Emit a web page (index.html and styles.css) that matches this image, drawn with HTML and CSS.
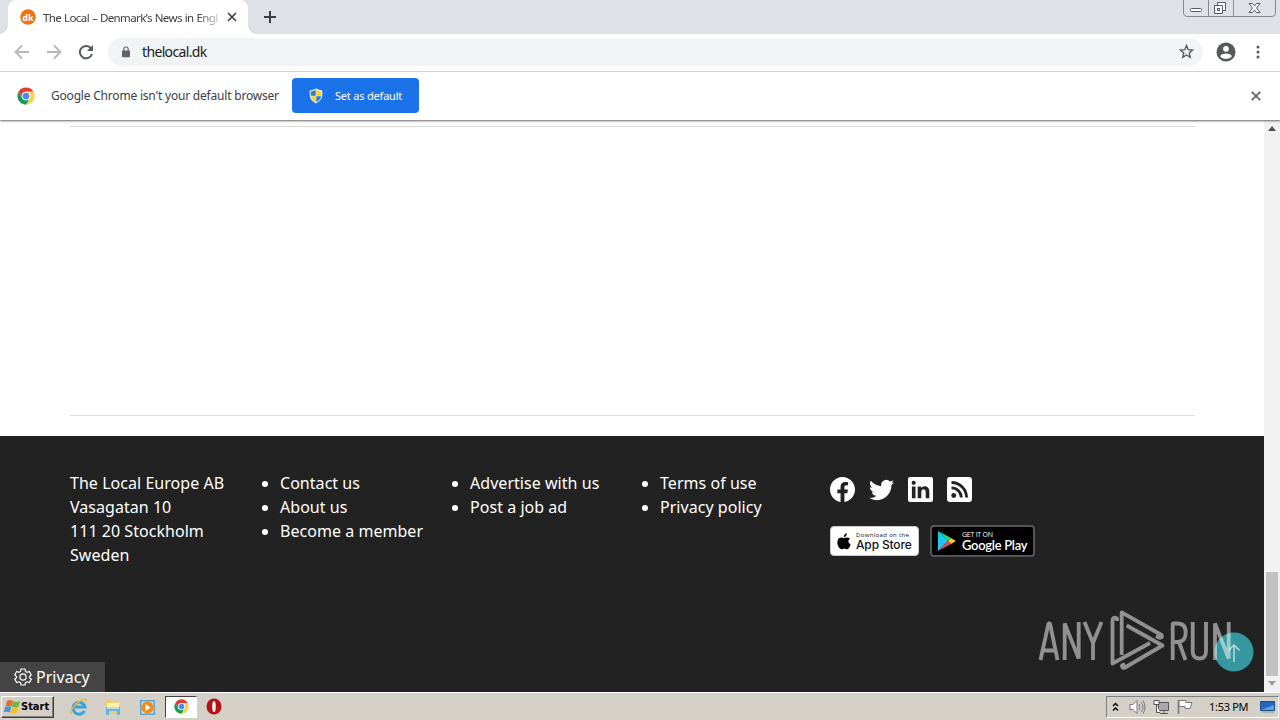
FILE: index.html
```html
<!DOCTYPE html>
<html lang="en">
<head>
<meta charset="utf-8">
<title>The Local – Denmark’s News in English</title>
<link rel="stylesheet" href="styles.css">
</head>
<body>
<svg class="defs" width="0" height="0">
  <symbol id="chrome" viewBox="0 0 48 48">
    <circle cx="24" cy="24" r="23" fill="#fff"/>
    <path fill="#e33b2e" d="M4.1 12.5A23 23 0 0 1 43.9 12.5H24A11.5 11.5 0 0 0 14 18.3L13.9 29.5Z"/>
    <path fill="#fcd04b" d="M43.9 12.5A23 23 0 0 1 24 47L34 29.7A11.5 11.5 0 0 0 24 12.5Z"/>
    <path fill="#169b55" d="M24 47A23 23 0 0 1 4.1 12.5L14 29.7A11.5 11.5 0 0 0 34 29.7Z"/>
    <circle cx="24" cy="24" r="11.5" fill="#fff"/><circle cx="24" cy="24" r="9" fill="#4a8af4"/>
  </symbol>
</svg>
<div class="screen">
  <header class="tabstrip">
    <div class="tab">
      <svg class="favicon" width="16" height="16" viewBox="0 0 16 16"><circle cx="8" cy="8" r="7.8" fill="#ee7410"/><text class="dk" x="8" y="11.5" text-anchor="middle">dk</text></svg>
      <span class="tab-title">The Local – Denmark’s News in English</span>
      <svg class="tab-close" width="10" height="10" viewBox="0 0 10 10"><path d="M1 1l8 8M9 1l-8 8" stroke="#3c4043" stroke-width="1.7"/></svg>
    </div>
    <svg class="new-tab" width="14" height="14" viewBox="0 0 14 14"><path d="M7 1v12M1 7h12" stroke="#3c4043" stroke-width="2"/></svg>
    <svg class="window-controls" width="94" height="18" viewBox="0 0 94 18" fill="none">
      <path d="M.5 0V13q0 3.500 3.500 3.500H89q3.500 0 3.500-3.500V0M25.500 0v16M50.500 0v16" stroke="#858b94"/>
      <rect x="7.500" y="8.500" width="11" height="3" rx="1" fill="#fff" stroke="#555b64"/>
      <path d="M34.500 2.500h8v8h-3v3h-8v-8h3zM34.500 5.500h5v5" fill="#fff" stroke="#555b64"/><rect x="34.500" y="8.500" width="2" height="2" stroke="#555b64"/>
      <path d="M66 3.500h3.500l2 2.500 2-2.500H77l-3.500 4.500 3.500 4.500h-3.500l-2-2.500-2 2.500H66l3.500-4.500z" fill="#fff" stroke="#555b64"/>
    </svg>
  </header>
  <nav class="toolbar">
    <svg class="nav-icon" width="16" height="16" viewBox="0 0 16 16" fill="none" stroke="#b5b7ba" stroke-width="1.800"><path d="M15 8H2M8 1.500L1.500 8 8 14.500"/></svg>
    <svg class="nav-icon" width="16" height="16" viewBox="0 0 16 16" fill="none" stroke="#b5b7ba" stroke-width="1.800"><path d="M1 8h13M8 1.500L14.500 8 8 14.500"/></svg>
    <svg class="nav-icon" width="16" height="16" viewBox="0 0 16 16"><path d="M13 4.300A6.200 6.200 0 1 0 14 10" fill="none" stroke="#55595e" stroke-width="2"/><path d="M15 1v6H9z" fill="#55595e"/></svg>
    <div class="omnibox">
      <svg class="lock" width="8" height="12" viewBox="0 0 10 14"><rect y="5" width="10" height="8.500" rx="1" fill="#5f6368"/><path d="M2.300 6V3.300a2.700 2.500 0 0 1 5.400 0V6" fill="none" stroke="#5f6368" stroke-width="1.400"/></svg>
      <span class="url">thelocal.dk</span>
      <svg class="star" width="15" height="15" viewBox="0 0 24 24"><path d="M12 2.500l2.700 6.600 7.100.6-5.400 4.700 1.600 7L12 17.600l-6 3.800 1.600-7-5.400-4.700 7.100-.6z" fill="none" stroke="#55595e" stroke-width="2.200"/></svg>
    </div>
    <svg class="profile" width="20" height="20" viewBox="0 0 20 20"><circle cx="10" cy="10" r="9.500" fill="#55595e"/><circle cx="10" cy="6.800" r="2.900" fill="#fff"/><path d="M4.200 14.200c1-3.700 10.600-3.700 11.600 0-2.500 3.500-9.100 3.500-11.600 0z" fill="#fff"/></svg>
    <svg class="menu" width="4" height="14" viewBox="0 0 4 14" fill="#55595e"><circle cx="2" cy="2" r="1.500"/><circle cx="2" cy="7" r="1.500"/><circle cx="2" cy="12" r="1.500"/></svg>
  </nav>
  <section class="infobar">
    <svg width="18" height="18"><use href="#chrome"/></svg>
    <span class="info-text">Google Chrome isn't your default browser</span>
    <button class="default-btn">
      <svg width="14" height="16" viewBox="0 0 14 16"><path d="M7 .5Q10 2 13.300 2.400V7Q13 12.500 7 15.500 1 12.500.7 7V2.400Q4 2 7 .5z" fill="#e8eef5"/><path d="M6.700 2v5.700H1.800V3.500Q4 3.200 6.700 2zM7.300 8.300h4.900Q11.500 12 7.300 14.200z" fill="#2d7dc8"/><path d="M7.300 2Q10 3.200 12.200 3.500v4.200H7.300zM1.800 8.300h4.900v5.900Q2.500 12 1.800 8.300z" fill="#f8d22a"/></svg>
      <span>Set as default</span>
    </button>
    <svg class="info-close" width="10" height="10" viewBox="0 0 10 10"><path d="M.8.8l8.400 8.400M9.200.8L.8 9.200" stroke="#5f6368" stroke-width="1.800"/></svg>
  </section>

  <div class="viewport">
    <main class="page">
      <div class="content"><div class="ad-slot"></div></div>
      <footer class="footer">
        <address class="address">The Local Europe AB<br>Vasagatan 10<br>111 20 Stockholm<br>Sweden</address>
        <ul class="links"><li>Contact us</li><li>About us</li><li>Become a member</li></ul>
        <ul class="links"><li>Advertise with us</li><li>Post a job ad</li></ul>
        <ul class="links"><li>Terms of use</li><li>Privacy policy</li></ul>
        <div class="social">
          <div class="social-row">
            <svg width="25" height="25" viewBox="0 0 24 24" fill="#fff"><path d="M24 12.070C24 5.400 18.630 0 12 0S0 5.400 0 12.070C0 18.100 4.390 23.100 10.130 24v-8.440H7.080v-3.490h3.050V9.410c0-3.020 1.790-4.690 4.530-4.690 1.310 0 2.680.24 2.680.24v2.970h-1.510c-1.490 0-1.960.93-1.960 1.890v2.250h3.330l-.53 3.490h-2.800V24C19.610 23.100 24 18.100 24 12.070z"/></svg>
            <svg width="25" height="26" viewBox="0 0 24 24" fill="#fff"><path d="M23.950 4.570a10 10 0 0 1-2.820.77 4.960 4.960 0 0 0 2.160-2.720c-.95.550-2 .950-3.130 1.180a4.920 4.920 0 0 0-8.380 4.480C7.690 8.090 4.070 6.130 1.640 3.160a4.920 4.920 0 0 0 1.520 6.570 4.900 4.900 0 0 1-2.230-.61v.06a4.920 4.920 0 0 0 3.950 4.830 5 5 0 0 1-2.210.08 4.940 4.940 0 0 0 4.600 3.420A9.870 9.870 0 0 1 0 19.540a13.990 13.990 0 0 0 7.550 2.210c9.050 0 14-7.500 14-13.980 0-.21 0-.42-.02-.63a9.900 9.900 0 0 0 2.420-2.570z"/></svg>
            <svg width="25" height="25" viewBox="0 0 25 25"><rect width="25" height="25" rx="2" fill="#fff"/><g fill="#222"><circle cx="5.700" cy="5.800" r="2.100"/><path d="M3.900 9.500h3.600v11.700H3.900zM9.700 9.500h3.400v1.600c1.700-3 8.200-2.900 8.200 3.100v7h-3.600v-6.200c0-3.800-4.400-3.500-4.400 0v6.200H9.700z"/></g></svg>
            <svg width="25" height="25" viewBox="0 0 25 25"><rect width="25" height="25" rx="3" fill="#fff"/><circle cx="6.700" cy="18.500" r="2.400" fill="#222"/><path d="M4.500 10.800a9.800 9.800 0 0 1 9.800 9.800M4.500 5.500a15.100 15.100 0 0 1 15.100 15.100" fill="none" stroke="#222" stroke-width="2.800"/></svg>
          </div>
          <div class="badges">
            <div class="badge apple">
              <svg width="14" height="17" viewBox="0 0 14 17"><path d="M9.800.2q.1 3.300-3 3.900Q6.700 1.200 9.800.2zM12.900 5.700q-3.500 2.500.7 5.700-1.500 4.700-3.700 4.800-1 0-2.600-.7-1.500.7-2.400.7C1.500 16 .1 11.200.4 8.700.8 4.500 4 3.700 7 5.100q4-1.700 5.900.6z"/></svg>
              <div class="badge-text"><small>Download on the</small><b>App Store</b></div>
            </div>
            <div class="badge google">
              <svg width="18" height="20" viewBox="0 0 18 20"><path fill="#18c9ef" d="M0 0v20L10 10z"/><path fill="#16df85" d="M0 0l13 7-3 3z"/><path fill="#f04458" d="M0 20l13-7-3-3z"/><path fill="#ffbd28" d="M13 7l5 3-5 3-3-3z"/></svg>
              <div class="badge-text"><small>GET IT ON</small><b>Google Play</b></div>
            </div>
          </div>
        </div>
        <div class="privacy">
          <svg width="18" height="18" viewBox="0 0 18 18" fill="none" stroke="#fff" stroke-width="1.200"><path d="M7 1h4l.5 2.400 1.500.9 2.300-.8 2 3.400L15.500 8.500v1.200l1.800 1.500-2 3.400-2.300-.8-1.500.9L11 17H7l-.5-2.300-1.500-.9-2.300.8-2-3.400 1.800-1.500V8.500L.7 6.900l2-3.400 2.300.8 1.500-.9z"/><circle cx="9" cy="9" r="3.100"/></svg>
          <span>Privacy</span>
        </div>
        <svg class="to-top" width="40" height="40" viewBox="0 0 40 40"><circle cx="20" cy="20" r="19.500" fill="#35989e"/><path d="M20 30V13M14.500 18.500L20 13l5.500 5.500" fill="none" stroke="#b9d7d9" stroke-width="1.500"/></svg>
        <svg class="watermark" width="196" height="64" viewBox="0 0 196 64" fill="none" stroke="#fff">
          <path d="M2.500 51L10.500 14.500h1.500L19.500 51M5.500 41.500h11M26.700 51V14.500L40.700 49.500V13M46.500 13L55 34 63.500 13M55 34v17"/>
          <path d="M79 12V9.500Q74.500 7 74.500 12V54.500L112 34M83.700 46V3.300L123.500 26q1.500 3-2.500 2.500l-3-1.500M88.700 16.500L124.500 36.500 87 58.500q-3 1.500-3-2l3-1.500" stroke-linejoin="round"/>
          <path d="M134.700 51V14.500h5q8 0 8 9t-8 9.500h-5M141 33l6.500 18M154.700 13v29q0 7.500 6.700 7.500t6.600-7.500V13M177 51V14.500L190.700 49.500V13"/>
        </svg>
      </footer>
    </main>
    <aside class="scrollbar"><i class="arrow-up"></i><div class="thumb"></div><i class="arrow-down"></i></aside>
  </div>

  <div class="taskbar">
    <div class="start">
      <svg width="17" height="16" viewBox="0 0 17 16"><path fill="#e86c28" d="M3 2q3-2 6 0L7.500 7.500q-3-1.500-6 0z"/><path fill="#70b63e" d="M9.300 2.200q3 1.400 6.700 0L14.500 7.700q-3 1.400-6.500 0z"/><path fill="#4a94d4" d="M1.200 8q3-1.500 6 0l-1.500 5.500q-3-1.400-6 0z"/><path fill="#f3bd28" d="M7.900 8.200q3 1.400 6.400 0l-1.500 5.500q-3 1.400-6.400 0z"/></svg>
      <b>Start</b>
    </div>
    <div class="apps">
      <svg width="18" height="18" viewBox="0 0 18 18" fill="none"><path d="M14.500 13A6 6 0 1 1 15 9H5" stroke="#36a3df" stroke-width="3"/><path d="M2 15C-2 16 4 6 10 3s7-2 6 1" stroke="#dfb943" stroke-width="1.400"/></svg>
      <svg width="18" height="18" viewBox="0 0 18 18"><path d="M2 2h5l1 2h7v12H2z" fill="#e9cf6b"/><path d="M3 5h12v6H3z" fill="#fff2a9"/><path d="M2 9h14v8h-3v-4H5v4H2z" fill="#65b5dc"/><path d="M3 9h12v2H3z" fill="#b6e0ef"/></svg>
      <svg width="18" height="18" viewBox="0 0 18 18"><path d="M2 2h15v15H2z" fill="#5aa5d5"/><path d="M3.500 3.500h12v12h-12z" fill="#bfe1ef"/><circle cx="9.500" cy="9.500" r="6" fill="#f58a16"/><path d="M7.500 6l5 3.500-5 3.500z" fill="#fff"/></svg>
      <div class="active-app"><svg width="15" height="15"><use href="#chrome"/></svg></div>
      <svg width="16" height="17" viewBox="0 0 16 17"><ellipse cx="8" cy="8.500" rx="7.500" ry="8" fill="#b51218"/><ellipse cx="8" cy="8.500" rx="1.800" ry="5.500" fill="#eee"/></svg>
    </div>
    <div class="tray">
      <svg width="7" height="10" viewBox="0 0 7 10" fill="none" stroke="#000" stroke-width="1.400"><path d="M1 4l2.500-2.500L6 4M1 8.500L3.500 6 6 8.500"/></svg>
      <svg width="17" height="16" viewBox="0 0 17 16" fill="none" stroke="#777"><path d="M1 5.500h3l4-4v13l-4-4H1z" fill="#fff"/><path d="M10 5q2 3 0 6M12 3q4 5 0 10M14 1.500q4 6.500 0 13"/></svg>
      <svg width="17" height="16" viewBox="0 0 17 16" fill="none" stroke="#555"><path d="M5.500 3.500h10v8h-10zM7 14.500h8M11 12v2" fill="#aaa"/><path d="M1 1.500h5v4H1zM3.500 6v7.500H7" fill="#fff"/></svg>
      <svg width="17" height="16" viewBox="0 0 17 16" stroke="#777"><path d="M1.500 1v14" stroke-width="1.500"/><path d="M2 1.500h7v2h6l-2 6H8v-2H2z" fill="#fff"/></svg>
      <time>1:53 PM</time>
      <svg width="16" height="13" viewBox="0 0 16 13"><path d="M.5 1.500h14v9H.5z" fill="#2467bd" stroke="#1c4d89"/><path d="M1 10L14 5v5z" fill="#62a1dd"/><path d="M2 12h12" stroke="#8795a3"/></svg>
    </div>
  </div>
</div>
</body>
</html>
```
FILE: styles.css
```css
* { box-sizing: border-box; }
body { margin: 0; font-family: "Noto Sans", sans-serif; }
svg { display: block; flex: none; }
.defs { position: absolute; }
.screen { width: 1280px; height: 720px; display: flex; flex-direction: column; overflow: hidden; background: #fff; }
.tabstrip { height: 34px; background: #dee1e6; display: flex; padding-left: 8px; }
.tab { position: relative; width: 240px; height: 34px; background: #fff; border-radius: 8px 8px 0 0; display: flex; align-items: center; padding-left: 12px; }
.tab::before, .tab::after { content: ""; position: absolute; bottom: 0; width: 8px; height: 8px; }
.tab::before { left: -8px; background: radial-gradient(circle at 0 0, #dee1e6 7.500px, #fff 8px); }
.tab::after { right: -8px; background: radial-gradient(circle at 100% 0, #dee1e6 7.500px, #fff 8px); }
.dk { font: bold 9px "Noto Sans", sans-serif; fill: #fff; }
.tab-title { width: 175px; margin-left: 7px; font-size: 11.500px; letter-spacing: -.6px; word-spacing: .5px; color: #3c4043; white-space: nowrap; overflow: hidden; -webkit-mask-image: linear-gradient(90deg, #000 155px, transparent 182px); }
.tab-close { margin-left: 9px; }
.new-tab { margin: 10px 0 0 15px; }
.window-controls { margin-left: auto; margin-right: 3px; }
.toolbar { height: 38px; display: flex; align-items: center; padding: 0 20px 2px 14px; border-bottom: 1px solid #dadce0; }
.nav-icon { margin-right: 16px; }
.omnibox { width: 1095px; height: 28px; margin-left: -2px; border-radius: 14px; background: #f1f3f4; display: flex; align-items: center; padding: 0 9px 0 14px; }
.url { font-size: 14px; letter-spacing: -.65px; margin-left: 12px; color: #202124; }
.star { margin-left: auto; }
.profile { margin-left: 13px; }
.menu { margin-left: auto; }
.infobar { position: relative; height: 48px; display: flex; align-items: center; padding: 0 19px 0 17px; box-shadow: 0 1px 2px #666; z-index: 1; background: #fff; }
.info-text { width: 228px; margin-left: 16px; margin-top: -1px; font-size: 12px; letter-spacing: -.2px; color: #3c4043; white-space: nowrap; }
.default-btn { width: 127px; height: 35px; margin-top: -1px; margin-left: 13px; border: 0; border-radius: 4px; background: #1a73e8; color: #fff; font: 11px "Noto Sans", sans-serif; letter-spacing: -.2px; display: flex; align-items: center; padding: 0 0 0 17px; gap: 12px; white-space: nowrap; }
.info-close { margin-left: auto; }
.viewport { height: 572px; display: flex; }
.page { width: 1264px; display: flex; flex-direction: column; }
.content { height: 316px; padding: 6px 69px 20px 70px; }
.ad-slot { height: 290px; border-top: 1px solid #d8d8d8; border-bottom: 1px solid #ddd; }
.footer { position: relative; height: 256px; background: #222; color: #fff; display: flex; padding: 35px 0 0 70px; font-size: 16px; letter-spacing: .04px; line-height: 24px; }
.address { width: 190px; font-style: normal; }
.links { width: 190px; margin: 0; padding-left: 20px; white-space: nowrap; }
.social { padding-top: 6px; }
.social-row { height: 25px; display: flex; gap: 14px; align-items: center; }
.badges { display: flex; margin-top: 23px; gap: 11px; align-items: center; }
.badge { display: flex; align-items: center; border-radius: 4px; overflow: hidden; white-space: nowrap; }
.badge-text { display: flex; flex-direction: column; }
.apple { width: 89px; height: 30px; background: #fff; color: #111; padding-left: 6px; gap: 5px; border: 1px solid #ccc; }
.google { width: 105px; height: 32px; background: #000; border: 2px solid #555; padding-left: 6px; gap: 6px; }
.badge small { font: 6px/8px "Open Sans", sans-serif; letter-spacing: .35px; }
.badge b { font: 500 12px/12px Inter, sans-serif; letter-spacing: -.15px; }
.google b { font: 600 13px/13px Lato, sans-serif; letter-spacing: -.3px; }
.google small { font-size: 7px; letter-spacing: -.25px; }
.privacy { position: absolute; left: 0; bottom: 0; width: 105px; height: 30px; background: #444; display: flex; align-items: center; gap: 4px; padding-left: 14px; }
.to-top { position: absolute; left: 1214px; top: 196px; }
.watermark { position: absolute; left: 1038px; top: 173px; opacity: .5; stroke-width: 3.800px; stroke-linejoin: bevel; }
.scrollbar { width: 16px; background: #f1f1f1; display: flex; flex-direction: column; align-items: center; padding-top: 6px; }
.arrow-up, .arrow-down { border: 4px solid transparent; }
.arrow-up { border-bottom: 5px solid #505050; border-top: 0; }
.arrow-down { border-top: 5px solid #a0a0a0; border-bottom: 0; margin-top: 5px; }
.thumb { width: 12px; height: 104px; margin-top: 441px; background: #c1c1c1; }
.taskbar { height: 28px; background: #d4d0c8; border-top: 1px solid #fff; display: flex; align-items: center; }
.start { width: 53px; height: 22px; margin-left: 1px; display: flex; align-items: center; padding-left: 2px; border: 1px solid; border-color: #fff #404040 #404040 #fff; box-shadow: inset -1px -1px #808080; font-family: "DejaVu Sans Condensed", sans-serif; font-size: 11px; color: #000; }
.apps { display: flex; align-items: center; margin-left: 16px; gap: 16px; }
.active-app { width: 32px; height: 22px; margin: 0 -7px; display: grid; place-items: center; background: #fff; border: 1px solid; border-color: #404040 #fff #fff #404040; }
.tray { width: 173px; height: 22px; margin-left: auto; margin-right: 1px; border: 1px solid; border-color: #808080 #fff #fff #808080; display: flex; align-items: center; padding-left: 5px; }
.tray svg + svg { margin-left: 7px; }
.tray svg:nth-child(2) { margin-left: 10px; }
.tray time { width: 40px; margin: 0 11px 0 15px; font: 11px "Noto Sans", sans-serif; letter-spacing: -.3px; white-space: nowrap; color: #000; }
```
